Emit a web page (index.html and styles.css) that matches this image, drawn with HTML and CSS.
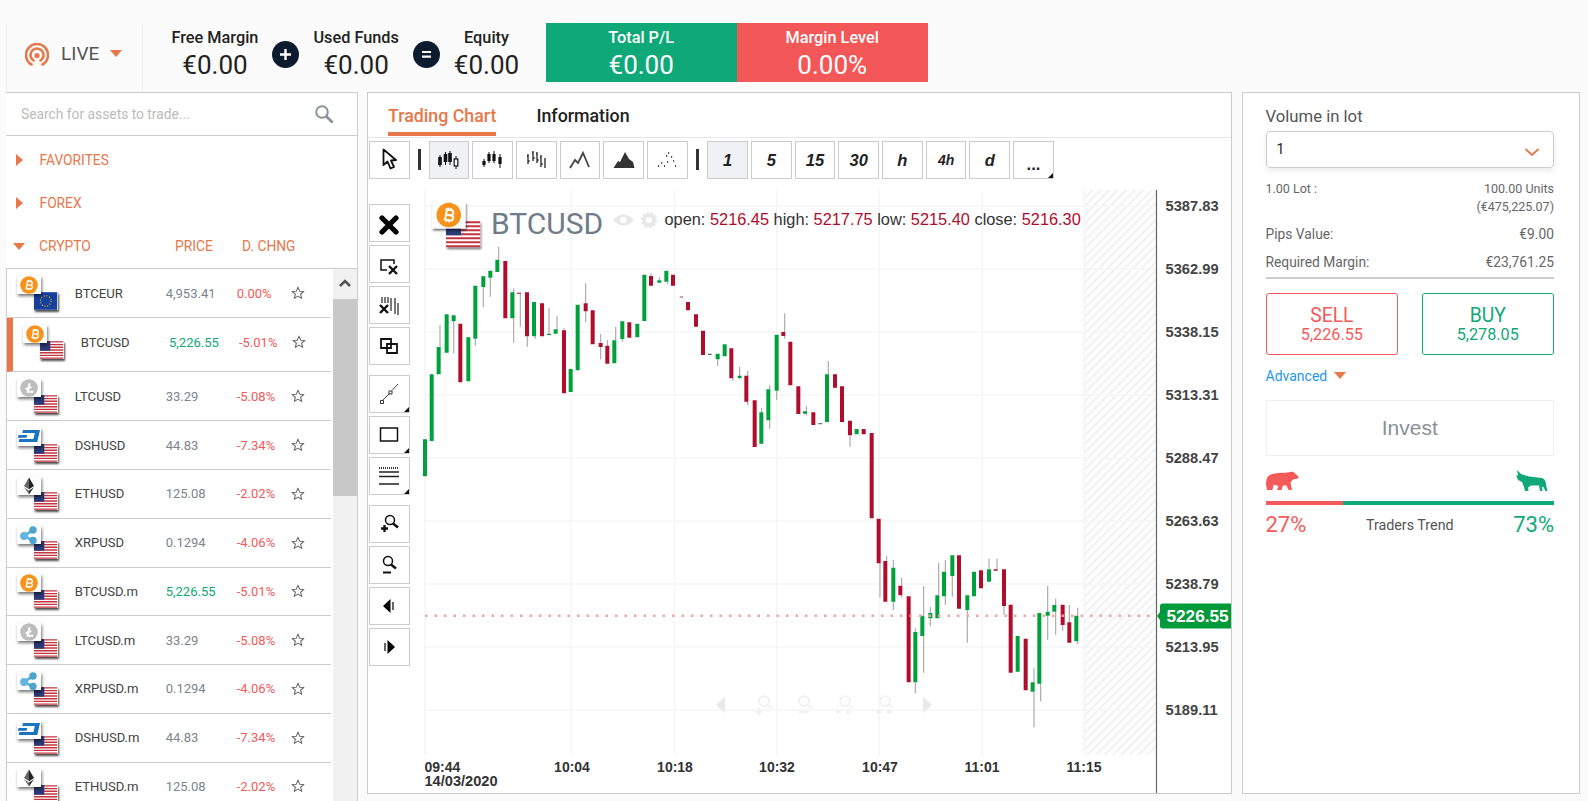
FILE: index.html
```html
<!DOCTYPE html>
<html lang="en">
<head>
<meta charset="utf-8">
<title>Trading platform</title>
<link rel="stylesheet" href="styles.css">
</head>
<body>
<svg class="sprite" aria-hidden="true">
  <symbol id="btc" viewBox="0 0 24 18"><circle cx="12" cy="9" r="8.8" fill="#f7931a"/><g transform="rotate(10 12 9)"><path d="M10 5.3V12.7M9 5.3H13Q15 5.3 15 7.1T13 9H10M13 9Q15.6 9 15.6 10.9T13 12.7H9M11 3.9V5.3M13 3.9V5.3M11 12.7V14.1M13 12.7V14.1" fill="none" stroke="#fff" stroke-width="1.4"/></g></symbol>
  <symbol id="ltc" viewBox="0 0 24 18"><circle cx="12" cy="9" r="8.8" fill="#bdbdbd"/><path d="M12.6 4.3L10.7 12.8H16.2M8.6 10.2L14.4 8" fill="none" stroke="#fff" stroke-width="1.9"/></symbol>
  <symbol id="dsh" viewBox="0 0 24 18"><path d="M6 2H23L20.3 14H1.5L2.4 11H16.4L17.8 5H5.2ZM1.6 7H10.3L9.5 9.8H.7Z" fill="#1c75bc"/></symbol>
  <symbol id="eth" viewBox="0 0 24 18"><path d="M12 .5L17 9L12 12.2Z" fill="#222"/><path d="M12 .5L7 9L12 12.2Z" fill="#666"/><path d="M7 10.3L12 17.5V13.5Z" fill="#777"/><path d="M17 10.3L12 17.5V13.5Z" fill="#333"/></symbol>
  <symbol id="xrp" viewBox="0 0 24 18"><path d="M7 10L16 4M7 10L16 14.500" stroke="#62b5dd" stroke-width="3"/><circle cx="7" cy="10" r="3.900" fill="#62b5dd"/><circle cx="16" cy="4" r="3.700" fill="#4fa3cf"/><circle cx="16" cy="14.5" r="3.700" fill="#4fa3cf"/></symbol>
  <symbol id="us" viewBox="0 0 24 18"><rect width="24" height="18" fill="#fff"/><path d="M12 0V18" stroke="#c3343f" stroke-width="24" stroke-dasharray="1.385"/><rect width="10.5" height="9.7" fill="#2b3a78"/></symbol>
  <symbol id="eu" viewBox="0 0 24 18"><rect width="24" height="18" fill="#17409c"/><circle cx="12" cy="9" r="5.4" fill="none" stroke="#fc0" stroke-width="1.2" stroke-dasharray="1 1.83"/></symbol>
  <symbol id="star" viewBox="0 0 16 16"><path d="M8 1.3L9.9 5.9L14.8 6.2L11 9.4L12.2 14.2L8 11.6L3.8 14.2L5 9.4L1.2 6.2L6.1 5.9Z" fill="none" stroke="#666" stroke-width="1.2" stroke-linejoin="round"/></symbol>
</svg>

<div class="app">
  <header class="topbar">
    <div class="live">
      <svg class="live-icon" viewBox="0 0 24 24"><path d="M6.5 21.5A11 11 0 1 1 17.5 21.5M8.5 17.5A6.5 6.5 0 1 1 15.5 17.5" fill="none" stroke="#e8774a" stroke-width="2.6" stroke-linecap="round"/><circle cx="12" cy="12.5" r="2.6" fill="#e8774a"/></svg>
      <span class="live-text">LIVE</span>
      <span class="caret"></span>
    </div>
    <div class="stats">
      <div class="stat"><div class="stat-label">Free Margin</div><div class="stat-value">€0.00</div></div>
      <div class="op"><svg viewBox="0 0 27 27"><path d="M13.5 8V19M8 13.5H19" stroke="#fff" stroke-width="2.4"/></svg></div>
      <div class="stat"><div class="stat-label">Used Funds</div><div class="stat-value">€0.00</div></div>
      <div class="op"><svg viewBox="0 0 27 27"><path d="M9 11H18M9 15.6H18" stroke="#fff" stroke-width="2.2"/></svg></div>
      <div class="stat"><div class="stat-label">Equity</div><div class="stat-value">€0.00</div></div>
      <div class="card card-green"><div class="stat-label">Total P/L</div><div class="stat-value">€0.00</div></div>
      <div class="card card-red"><div class="stat-label">Margin Level</div><div class="stat-value">0.00%</div></div>
    </div>
  </header>

  <main class="panels">
    <aside class="assets">
      <div class="search">
        <span class="search-text">Search for assets to trade...</span>
        <svg class="search-icon" viewBox="0 0 20 20"><circle cx="8" cy="8" r="5.8" fill="none" stroke="#8a9299" stroke-width="2"/><path d="M12.2 12.2L18.6 18.4" stroke="#8a9299" stroke-width="2.8"/></svg>
      </div>
      <div class="cats">
        <div class="cat"><span class="tri-right"></span><span class="cat-name">FAVORITES</span></div>
        <div class="cat"><span class="tri-right"></span><span class="cat-name">FOREX</span></div>
        <div class="cat"><span class="tri-down"></span><span class="cat-name cat-wide">CRYPTO</span><span class="cat-price">PRICE</span><span class="cat-name">D. CHNG</span></div>
      </div>
      <div class="list-wrap">
        <div class="list">
          <div class="row row-first"><span class="pair"><svg class="tile"><use href="#btc"/></svg><svg class="flag"><use href="#eu"/></svg></span><span class="name">BTCEUR</span><span class="price">4,953.41</span><span class="chg">0.00%</span><svg class="star"><use href="#star"/></svg></div>
          <div class="row row-active"><span class="pair"><svg class="tile"><use href="#btc"/></svg><svg class="flag"><use href="#us"/></svg></span><span class="name">BTCUSD</span><span class="price up">5,226.55</span><span class="chg">-5.01%</span><svg class="star"><use href="#star"/></svg></div>
          <div class="row"><span class="pair"><svg class="tile"><use href="#ltc"/></svg><svg class="flag"><use href="#us"/></svg></span><span class="name">LTCUSD</span><span class="price">33.29</span><span class="chg">-5.08%</span><svg class="star"><use href="#star"/></svg></div>
          <div class="row"><span class="pair"><svg class="tile"><use href="#dsh"/></svg><svg class="flag"><use href="#us"/></svg></span><span class="name">DSHUSD</span><span class="price">44.83</span><span class="chg">-7.34%</span><svg class="star"><use href="#star"/></svg></div>
          <div class="row"><span class="pair"><svg class="tile"><use href="#eth"/></svg><svg class="flag"><use href="#us"/></svg></span><span class="name">ETHUSD</span><span class="price">125.08</span><span class="chg">-2.02%</span><svg class="star"><use href="#star"/></svg></div>
          <div class="row"><span class="pair"><svg class="tile"><use href="#xrp"/></svg><svg class="flag"><use href="#us"/></svg></span><span class="name">XRPUSD</span><span class="price">0.1294</span><span class="chg">-4.06%</span><svg class="star"><use href="#star"/></svg></div>
          <div class="row"><span class="pair"><svg class="tile"><use href="#btc"/></svg><svg class="flag"><use href="#us"/></svg></span><span class="name">BTCUSD.m</span><span class="price up">5,226.55</span><span class="chg">-5.01%</span><svg class="star"><use href="#star"/></svg></div>
          <div class="row"><span class="pair"><svg class="tile"><use href="#ltc"/></svg><svg class="flag"><use href="#us"/></svg></span><span class="name">LTCUSD.m</span><span class="price">33.29</span><span class="chg">-5.08%</span><svg class="star"><use href="#star"/></svg></div>
          <div class="row"><span class="pair"><svg class="tile"><use href="#xrp"/></svg><svg class="flag"><use href="#us"/></svg></span><span class="name">XRPUSD.m</span><span class="price">0.1294</span><span class="chg">-4.06%</span><svg class="star"><use href="#star"/></svg></div>
          <div class="row"><span class="pair"><svg class="tile"><use href="#dsh"/></svg><svg class="flag"><use href="#us"/></svg></span><span class="name">DSHUSD.m</span><span class="price">44.83</span><span class="chg">-7.34%</span><svg class="star"><use href="#star"/></svg></div>
          <div class="row"><span class="pair"><svg class="tile"><use href="#eth"/></svg><svg class="flag"><use href="#us"/></svg></span><span class="name">ETHUSD.m</span><span class="price">125.08</span><span class="chg">-2.02%</span><svg class="star"><use href="#star"/></svg></div>
        </div>
        <div class="scrollbar">
          <div class="scroll-up"><svg viewBox="0 0 24 24"><path d="M7 14L12 9L17 14" fill="none" stroke="#555" stroke-width="2.6"/></svg></div>
          <div class="scroll-thumb"></div>
        </div>
      </div>
    </aside>

    <section class="chart-panel">
      <nav class="tabs">
        <span class="tab tab-on">Trading Chart</span>
        <span class="tab">Information</span>
      </nav>
      <div class="toolbar">
        <button class="tb"><svg viewBox="0 0 24 24"><path d="M6.5 1.5V17L10.5 13.5L13.5 20.5L17 19L14 12.5L19 12Z" fill="#fff" stroke="#111" stroke-width="1.8" stroke-linejoin="round"/></svg></button>
        <span class="tb-div"></span>
        <button class="tb tb-on"><svg viewBox="0 0 24 24"><path d="M3 7V19M8.500 4V17M13 3V17M19 8V21" stroke="#111" stroke-width="1"/><path d="M3 9V17M8.500 6V14M13 5V14" stroke="#111" stroke-width="3.600"/><rect x="17.200" y="11" width="3.600" height="7" fill="#fff" stroke="#111" stroke-width="1.200"/></svg></button>
        <button class="tb"><svg viewBox="0 0 24 24"><path d="M3 11V19M8 4V15M13 3V15M19 6V20" stroke="#111" stroke-width="1"/><path d="M3 13V17M8 6V13M13 6V13M19 9V16" stroke="#111" stroke-width="3.200"/></svg></button>
        <button class="tb"><svg viewBox="0 0 24 24"><path d="M4 6V16M3 8H4M4 13H6M9 3V13M8 5H9M9 10H11M13 4V15M12 6H13M13 12H15M17 7V19M16 9H17M17 16H19M21 10V20" fill="none" stroke="#111" stroke-width="1.200"/></svg></button>
        <button class="tb"><svg viewBox="0 0 24 24"><path d="M2 20L7 12L10 15L15 5L21 19" fill="none" stroke="#444" stroke-width="1.800"/></svg></button>
        <button class="tb"><svg viewBox="0 0 24 24"><path d="M1.500 20L6 13L8 14L13 4L17 11L21 14L22.500 20Z" fill="#333"/></svg></button>
        <button class="tb"><svg viewBox="0 0 24 24"><path d="M3 18H4.200M6 15H7.200M9 18H10.200M11 8H12.200M13 5H14.200M16 9H17.200M18 13H19.200M20 18H21.200M12 14H13.200" stroke="#222" stroke-width="1.400"/></svg></button>
        <span class="tb-div tb-div2"></span>
        <button class="tb tf tb-on">1</button>
        <button class="tb tf">5</button>
        <button class="tb tf">15</button>
        <button class="tb tf">30</button>
        <button class="tb tf">h</button>
        <button class="tb tf tf-sm">4h</button>
        <button class="tb tf">d</button>
        <button class="tb tf tf-more corner">...</button>
      </div>
      <div class="chart-body">
        <div class="tools">
          <div class="tool-group">
            <button class="tl"><svg viewBox="0 0 24 24"><path d="M5 7L19 21M19 7L5 21" stroke="#000" stroke-width="5.200" stroke-linecap="round"/></svg></button>
            <button class="tl"><svg viewBox="0 0 24 24"><path d="M10 18H4V8H17V12" fill="none" stroke="#111" stroke-width="1.500"/><path d="M12 14L20 22M20 14L12 22" stroke="#111" stroke-width="2.400"/></svg></button>
            <button class="tl"><svg viewBox="0 0 24 24"><path d="M5 4V10M8 4V10M11 4V10M14 5V18M18 5V21M21 10V22" stroke="#222" stroke-width="1.200"/><path d="M3 12L11 20M11 12L3 20" stroke="#111" stroke-width="2.400"/></svg></button>
            <button class="tl"><svg viewBox="0 0 24 24"><path d="M4 5H14V14H4ZM10 10H20V19H10Z" fill="none" stroke="#111" stroke-width="1.800"/></svg></button>
          </div>
          <div class="tool-group">
            <button class="tl corner"><svg viewBox="0 0 24 24"><path d="M21 2L15 8.500M12 12L6 18" stroke="#444"/><path d="M12 9H15V12H12ZM3.500 18.500H6.500V21.500H3.500Z" fill="none" stroke="#333"/></svg></button>
            <button class="tl corner"><svg viewBox="0 0 24 24"><rect x="3.500" y="5" width="17" height="13" fill="none" stroke="#111" stroke-width="1.500"/></svg></button>
            <button class="tl corner"><svg viewBox="0 0 24 24"><path d="M2 4H22" stroke="#333" stroke-width="2" stroke-dasharray="1 1"/><path d="M2 8H22M2 12.500H22M2 20H22" stroke="#222" stroke-width="1.300"/></svg></button>
          </div>
          <div class="tool-group">
            <button class="tl"><svg viewBox="0 0 24 24"><circle cx="13" cy="8" r="4.500" fill="none" stroke="#111" stroke-width="1.500"/><path d="M16 11.500L21 15.500" stroke="#111" stroke-width="2.400"/><path d="M7.500 13V20M4 16.500H11" stroke="#111" stroke-width="2.400"/></svg></button>
            <button class="tl"><svg viewBox="0 0 24 24"><circle cx="11" cy="8" r="4.500" fill="none" stroke="#111" stroke-width="1.500"/><path d="M14 11.500L19 15.500" stroke="#111" stroke-width="2.400"/><path d="M6 19.500H14" stroke="#111" stroke-width="2"/></svg></button>
            <button class="tl"><svg viewBox="0 0 24 24"><path d="M6 12L13.500 5V19Z" fill="#000"/><path d="M16 8V16" stroke="#333" stroke-width="1.500"/></svg></button>
            <button class="tl"><svg viewBox="0 0 24 24"><path d="M18 12L10.500 5V19Z" fill="#000"/><path d="M8 8V16" stroke="#333" stroke-width="1.500"/></svg></button>
          </div>
        </div>
        <svg class="plot" viewBox="415 181 816 612">
          <defs>
            <pattern id="hatch" width="6" height="6" patternUnits="userSpaceOnUse" patternTransform="rotate(45)"><rect width="6" height="6" fill="#fdfdfd"/><path d="M0 0V6" stroke="#efefef" stroke-width="3"/></pattern>
            <filter id="sh" x="-20%" y="-20%" width="150%" height="150%"><feDropShadow dx="1" dy="2" stdDeviation="1.200" flood-color="#000" flood-opacity=".55"/></filter>
          </defs>
          <rect x="1084" y="190" width="72" height="565" fill="url(#hatch)"/>
          <path class="grid" d="M425 190V755M571.500 190V755M674.500 190V755M776.700 190V755M879.300 190V755M982.300 190V755M1084.300 190V755M425 206H1156M425 269H1156M425 332H1156M425 395H1156M425 458H1156M425 521H1156M425 584H1156M425 647H1156M425 710H1156"/>
          <g class="ghost">
            <path d="M716 705L725 697V713ZM727 700V710"/>
            <path d="M921 700V710M923 697L932 705L923 713Z"/>
            <circle class="ghost-ring" cx="764" cy="701" r="5"/><circle class="ghost-ring" cx="804" cy="701" r="5"/><circle class="ghost-ring" cx="845" cy="701" r="5"/><circle class="ghost-ring" cx="885" cy="701" r="5"/>
            <path class="ghost-line" d="M768 705L772 708M808 705L812 708M849 705L853 708M889 705L893 708M755 712H763M759 708V716M798 712H808M836 712H841M838 710V714M846 712H851M848 710V714M876 712H882M878 710V714M886 712H892M889 710V714"/>
          </g>
          <g transform="translate(365 190) scale(.33333)">
            <path class="wick" d="M225 405V470M266 394V490M331 446V467M355 291V352M376 263V320M401 170V209M446 295V458M466 311V410M487 439V470M511 439V446M552 353V431M576 378V418M597 415V421M662 280V340M662 364V397M707 432V508M727 451V467M752 410V451M772 447V455M858 250V258M883 262V271M908 275V283M1058 508V528"/>
            <path class="green" d="M180 748V859M200 553V753M221 471V553M245 373V488M266 376V394M310 442V574M331 287V446M355 259V291M376 242V263M397 209V246M442 307V385M507 336V439M552 431V435M572 418V431M617 537V606M638 344V541M748 451V520M772 394V447M817 401V442M838 254V393M883 271V278M904 242V275M1058 491V508M1079 463V499"/>
            <path class="red" d="M286 401V577M421 213V385M462 308V311M486 307V439M531 340V439M597 421V610M662 340V364M683 361V463M707 459V471M727 467V521M793 397V443M858 258V287M924 254V287M969 336V361M993 373V410M1014 422V495"/>
            <path class="doji" d="M944 321H955M1029 493H1040"/>
          </g>
          <g transform="translate(725 240) scale(.33333)">
            <path class="wick" d="M24 415V422M44 380V418M68 392V407M68 485V496M110 503V517M134 436V448M134 541V566M155 452V480M179 220V276M179 288V296M244 498V526M310 363V403M375 586V620"/>
            <path class="green" d="M44 407V414M109 517V611M130 448V541M155 284V452M240 514V521M306 403V546M395 567V583"/>
            <path class="red" d="M19 325V415M64 407V485M89 481V621M175 276V288M196 305V436M220 439V522M265 517V555M330 403V443M351 439V546M375 542V586M416 567V583M440 579V835"/>
            <path class="doji" d="M280 551H292"/>
          </g>
          <g transform="translate(850 520) scale(.33333)">
            <path class="wick" d="M90 130V233M110 108V123M130 120V143M130 245V270M155 173V197M155 226V233M196 325V336M196 487V520M221 198V287M221 348V458M241 260V279M241 295V319M266 128V226M286 120V155M286 229V254M307 168V230M352 270V368M417 116V148M441 116V148M462 258V284M552 444V487M552 515V622M572 491V544M593 198V275M593 287V360M617 236V255M617 275V344M638 315V332M658 255V307M683 263V287M683 364V372"/>
            <path class="green" d="M130 143V245M196 336V487M217 287V348M241 279V295M262 226V295M282 155V229M307 106V168M352 226V270M372 155V229M417 148V185M503 348V455M548 487V515M568 279V491M593 275V287M613 255V275M679 287V364"/>
            <path class="red" d="M86 -4V130M106 123V245M151 197V226M176 229V487M327 106V266M393 151V205M437 148V152M462 148V258M482 254V458M527 356V511M638 254V315M658 307V368"/>
          </g>
          <path class="last-line" d="M425 615.700H1157"/>
          <path class="axis" d="M1156.500 190V793"/>
          <g class="y-labels">
            <text x="1165.500" y="211">5387.83</text><text x="1165.500" y="274">5362.99</text><text x="1165.500" y="337">5338.15</text><text x="1165.500" y="400">5313.31</text><text x="1165.500" y="463">5288.47</text><text x="1165.500" y="526">5263.63</text><text x="1165.500" y="589">5238.79</text><text x="1165.500" y="652">5213.95</text><text x="1165.500" y="715">5189.11</text>
          </g>
          <path d="M1157 616L1160 612V606Q1160 603.500 1163 603.500H1231V628.500H1163Q1160 628.500 1160 626V620Z" fill="#009a3a"/>
          <text class="last-price" x="1166.500" y="622">5226.55</text>
          <g class="x-labels">
            <text x="424.500" y="772">09:44</text><text class="date" x="424.500" y="786">14/03/2020</text>
            <text class="mid" x="572" y="772">10:04</text><text class="mid" x="675" y="772">10:18</text><text class="mid" x="777" y="772">10:32</text><text class="mid" x="880" y="772">10:47</text><text class="mid" x="982" y="772">11:01</text><text class="mid" x="1084" y="772">11:15</text>
          </g>
          <svg x="446" y="221" width="34.500" height="26.500" filter="url(#sh)"><use href="#us"/></svg>
          <rect x="432" y="202" width="33.500" height="26.500" fill="#fff" filter="url(#sh)"/>
          <svg x="432" y="202" width="33.500" height="26"><use href="#btc"/></svg>
          <text class="title" x="491" y="234">BTCUSD</text>
          <path class="dim" d="M613 220Q623.500 209 634 220Q623.500 231 613 220Z"/>
          <circle cx="623.500" cy="220" r="3.200" fill="#fff"/>
          <circle cx="649" cy="220" r="5" fill="none" stroke="#e8e8e8" stroke-width="4"/>
          <circle cx="649" cy="220" r="7.400" fill="none" stroke="#e8e8e8" stroke-width="2" stroke-dasharray="2.300 2.300"/>
          <text class="ohlc" x="664.500" y="225">open: <tspan class="v">5216.45</tspan> high: <tspan class="v">5217.75</tspan> low: <tspan class="v">5215.40</tspan> close: <tspan class="v">5216.30</tspan></text>
        </svg>
      </div>
    </section>

    <aside class="order">
      <div class="vol-label">Volume in lot</div>
      <div class="select"><span>1</span><svg viewBox="0 0 16 10"><path d="M1.500 2L8 8L14.500 2" fill="none" stroke="#e8774a" stroke-width="1.800"/></svg></div>
      <div class="meta meta-lot"><span>1.00 Lot :</span><span class="right">100.00 Units<br>(€475,225.07)</span></div>
      <div class="meta meta-big"><span>Pips Value:</span><span>€9.00</span></div>
      <div class="meta meta-big meta-req"><span>Required Margin:</span><span>€23,761.25</span></div>
      <div class="trade">
        <div class="trade-btn sell"><div class="trade-name">SELL</div><div class="trade-price">5,226.55</div></div>
        <div class="trade-btn buy"><div class="trade-name">BUY</div><div class="trade-price">5,278.05</div></div>
      </div>
      <div class="advanced"><span>Advanced</span><span class="caret caret-sm"></span></div>
      <div class="invest">Invest</div>
      <div class="animals">
        <svg class="bear" viewBox="0 0 33 20"><path d="M0 13C0 6 3 3 9 2.500C13 1.500 18 2 22 1.500C25 .5 28 .5 29 2.500L32.500 5.500L32 7.500L27 8.500L24.500 11.500L26 19H22.500L20.500 14.500L17 14.500L15.500 19H11L12.500 15L7.500 13.500L6.500 19H1Z" fill="#f45a5a"/></svg>
        <svg class="bull" viewBox="0 0 33 21"><path d="M1 5L3 6L2 0L6 4L9 5L14 6.500L27 8C30 9 31 12 31 15L32.500 21H30.500L28 16.500L27 17.500L27.500 21H25L24 15.500L16 15.500L13 17.500L13.500 21H10L9 17L7 12L3 10Z" fill="#0fa878"/></svg>
      </div>
      <div class="trend-bar"><span class="bar-red"></span><span class="bar-green"></span></div>
      <div class="trend"><span class="pct pct-red">27%</span><span class="trend-name">Traders Trend</span><span class="pct pct-green">73%</span></div>
    </aside>
  </main>
</div>
</body>
</html>
```

FILE: styles.css
```css
* { box-sizing: border-box; }
html, body { margin: 0; padding: 0; height: 801px; overflow: hidden; }
body { background: #fbfbfb; font-family: Roboto, "Liberation Sans", sans-serif; color: #333; }
.sprite { position: absolute; width: 0; height: 0; }
.app { height: 801px; overflow: hidden; }

/* Top bar */
.topbar { display: flex; height: 92px; padding: 23px 0 0 6px; }
.live { width: 137px; height: 69px; display: flex; align-items: center; padding: 0 0 9px 18px; border-left: 1px solid #efefef; border-right: 1px solid #efefef; }
.live-icon { width: 24px; height: 24px; margin-top: 3px; }
.live-text { font-size: 19px; color: #555; margin-left: 12px; }
.caret { width: 0; height: 0; border-left: 6.5px solid transparent; border-right: 6.5px solid transparent; border-top: 7.5px solid #e8774a; margin-left: 11px; }
.stats { display: flex; padding-left: 28.500px; }
.stat { text-align: center; color: #222; }
.stat-label { font-size: 16.300px; font-weight: 500; line-height: 20px; padding-top: 5px; }
.stat-value { font-size: 26px; line-height: 34px; }
.op { width: 27px; height: 27px; margin: 17.5px 14px 0; border-radius: 50%; background: #0c1b2e; }
.op svg { display: block; width: 27px; height: 27px; }
.card { width: 191px; height: 59px; color: #fff; text-align: center; }
.card-green { margin-left: 26.500px; background: #0fa978; }
.card-red { background: #f45757; }

/* Panels */
.panels { display: flex; align-items: flex-start; padding-left: 6px; gap: 9px; }
.assets { width: 352px; flex: none; background: #fff; border-top: 1px solid #ccc; border-right: 1px solid #ccc; }
.search { height: 43px; display: flex; align-items: center; justify-content: space-between; padding: 0 23px 0 15px; border-bottom: 1px solid #ccc; }
.search-text { font-size: 13.800px; color: #bbb; }
.search-icon { width: 20px; height: 20px; }
.cats { padding-top: 2.500px; }
.cat { height: 43.200px; display: flex; align-items: center; font-size: 13.800px; color: #e8774a; }
.tri-right { width: 0; height: 0; margin-left: 10px; border-top: 6.5px solid transparent; border-bottom: 6.5px solid transparent; border-left: 7px solid #e8774a; }
.tri-down { width: 0; height: 0; margin-left: 7px; border-left: 6.5px solid transparent; border-right: 6.5px solid transparent; border-top: 7.5px solid #e8774a; }
.cat-name { margin-left: 16.500px; }
.tri-down + .cat-name { margin-left: 14px; }
.cat-wide { width: 136px; }
.cat-price { width: 67px; margin-left: 0; }
.cat-price + .cat-name { margin-left: 0; }
.list-wrap { display: flex; height: 540px; border-top: 1px solid #ccc; border-left: 1px solid #ccc; overflow: hidden; }
.list { width: 324px; flex: none; overflow: hidden; }
.row { display: grid; grid-template-columns: 57.7px 91px 71px 54px 14px; align-items: center; height: 48.75px; padding-left: 10px; border-bottom: 1px solid #ccc; font-size: 13px; }
.row-first { height: 49.300px; }
.row-active { height: 54px; padding: 0 0 5px 10px; border-left: 6px solid #e8774a; grid-template-columns: 57.7px 88.3px 70px 53px 14px; }
.row-active + .row { height: 49px; }
.pair { position: relative; display: block; width: 42px; height: 34px; }
.tile { position: absolute; left: 0; top: 0; width: 24px; height: 18px; background: #fff; box-shadow: 1px 2px 3px rgba(0,0,0,.55); z-index: 1; }
.flag { position: absolute; left: 17px; top: 15.500px; width: 23.500px; height: 18px; box-shadow: 1px 2px 2px rgba(0,0,0,.7); }
.name { font-size: 13.100px; color: #444; white-space: nowrap; }
.price { color: #7a858e; white-space: nowrap; }
.price.up { color: #10a878; }
.chg { color: #f45a5a; white-space: nowrap; }
.star { width: 14px; height: 14px; }
.scrollbar { width: 25px; margin-left: 1.500px; background: #f1f1f1; }
.scroll-up { height: 27px; }
.scroll-up svg { display: block; width: 24px; height: 24px; margin-top: 3px; }
.scroll-thumb { height: 197px; background: #c8c8c8; }

/* Chart */
.chart-panel { width: 865px; height: 702px; flex: none; background: #fff; border: 1px solid #ccc; }
.tabs { display: flex; gap: 40px; height: 45px; padding-left: 20px; border-bottom: 1px solid #e8e8e8; }
.tab { height: 43px; padding-top: 12px; font-size: 17.800px; line-height: 21px; font-weight: 500; color: #222; }
.tab-on { color: #e8774a; border-bottom: 4px solid #e8774a; }
.toolbar { display: flex; align-items: flex-start; gap: 3px; height: 43px; padding: 3px 0 0 1px; }
.tb, .tl { position: relative; display: flex; align-items: center; justify-content: center; padding: 0; width: 40.700px; height: 38px; flex: none; background: #fff; border: 1px solid #ccc; }
.tb svg, .tl svg { width: 24px; height: 24px; }
.tb-on { background: #f0f1f5; }
.tb-div { width: 3px; height: 21px; margin: 8px 5px 0; background: #333; }
.tb-div2 { margin: 8px 5px 0 5.500px; }
.tf { font-family: "Liberation Sans", sans-serif; font-size: 16.500px; font-weight: 700; font-style: italic; color: #222; }
.tf-sm { font-size: 14px; }
.tf-more { font-style: normal; padding-top: 8px; }
.corner::after { content: ""; position: absolute; right: 0; bottom: 0; width: 0; height: 0; border-left: 5px solid transparent; border-bottom: 5px solid #111; }
.chart-body { display: flex; height: 612px; }
.tools { width: 47px; flex: none; padding: 23px 0 0 1px; display: flex; flex-direction: column; gap: 10px; }
.tool-group { display: flex; flex-direction: column; gap: 3px; }
.plot { display: block; width: 816px; height: 612px; flex: none; }
.grid { fill: none; stroke: #f5f5f5; stroke-width: 1.500; }
.wick { fill: none; stroke: #aaa; stroke-width: 3.500; }
.green { fill: none; stroke: #00a03c; stroke-width: 12; }
.red { fill: none; stroke: #b00c2c; stroke-width: 12; }
.doji { fill: none; stroke: #666; stroke-width: 3.500; }
.last-line { fill: none; stroke: #f5a49d; stroke-width: 2.500; stroke-dasharray: 2.500 7; }
.axis { fill: none; stroke: #666; stroke-width: 1.200; }
.y-labels text { font-family: "Liberation Sans", sans-serif; font-size: 14.700px; font-weight: 700; fill: #444; }
.x-labels text { font-family: "Liberation Sans", sans-serif; font-size: 14px; font-weight: 700; fill: #333; }
.x-labels .date { font-size: 14.600px; }
.x-labels .mid { text-anchor: middle; }
.last-price { font-family: "Liberation Sans", sans-serif; font-size: 17.200px; font-weight: 700; fill: #fff; }
.title { font-family: Roboto, sans-serif; font-size: 30px; fill: #6f7c88; }
.ohlc { font-family: "Liberation Sans", sans-serif; font-size: 16.350px; fill: #333; }
.ohlc .v { fill: #b00c2c; }
.dim { fill: #e8e8e8; }
.ghost { fill: #eaeaea; }
.ghost-ring { fill: none; stroke: #eee; stroke-width: 1.500; }
.ghost-line { fill: none; stroke: #eee; stroke-width: 1.500; }

/* Order */
.order { width: 338px; height: 702px; flex: none; margin-left: 1px; background: #fff; border: 1px solid #ccc; padding: 14px 25px 0 22.500px; }
.vol-label { font-size: 16.700px; line-height: 20px; color: #555; }
.select { display: flex; align-items: center; justify-content: space-between; height: 37px; margin-top: 3.500px; padding: 0 13px 0 10px; border: 1px solid #ccc; border-radius: 4px; box-shadow: 0 3px 6px rgba(0,0,0,.08); font-size: 14px; color: #222; }
.select svg { width: 16px; height: 10px; margin-top: 6px; }
.meta { display: flex; justify-content: space-between; color: #666; }
.meta-lot { margin-top: 12.500px; font-size: 12.500px; line-height: 18px; }
.right { text-align: right; }
.meta-big { font-size: 13.800px; line-height: 20px; margin-top: 8px; }
.meta-req { margin-top: 8px; padding-bottom: 5px; border-bottom: 2px solid #ccc; }
.trade { display: flex; justify-content: space-between; margin-top: 13.500px; }
.trade-btn { width: 132.700px; height: 62px; border-radius: 3px; text-align: center; padding-top: 12px; border: 1px solid; }
.buy { width: 132.500px; color: #10a878; border-color: #10a878; }
.sell { color: #f45a5a; border-color: #f45a5a; }
.trade-name { font-size: 19.300px; line-height: 19px; }
.trade-price { font-size: 16.200px; line-height: 20px; }
.advanced { display: flex; align-items: center; height: 20px; margin-top: 11px; font-size: 14px; color: #1e96f0; }
.caret-sm { margin-left: 7px; }
.invest { display: flex; align-items: center; justify-content: center; height: 56px; margin-top: 14px; border: 1px solid #f0f0f0; font-family: "Liberation Sans", sans-serif; font-size: 21px; color: #8a8f94; }
.animals { display: flex; justify-content: space-between; align-items: flex-end; height: 21px; margin-top: 14px; }
.bear { width: 33px; height: 20px; }
.bull { width: 33px; height: 21px; margin-right: 6px; }
.trend-bar { display: flex; height: 4px; margin-top: 10px; }
.bar-red { width: 77px; background: #f45a5a; }
.bar-green { flex: 1; background: #0fa978; }
.trend { display: flex; justify-content: space-between; align-items: center; margin-top: 5px; }
.pct { font-size: 22px; line-height: 30px; }
.pct-red { color: #f45a5a; }
.pct-green { color: #0fa978; }
.trend-name { font-size: 14.300px; color: #555; }
```
